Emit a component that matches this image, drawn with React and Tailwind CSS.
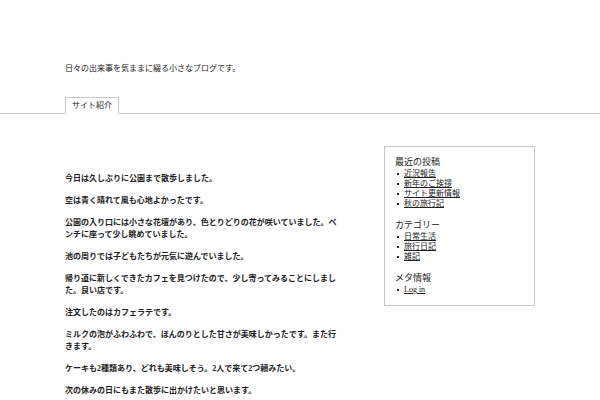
import React from "react";

const posts = ["近況報告", "新年のご挨拶", "サイト更新情報", "秋の旅行記"];
const categories = ["日常生活", "旅行日記", "雑記"];

const paragraphs = [
  "今日は久しぶりに公園まで散歩しました。",
  "空は青く晴れて風も心地よかったです。",
  "公園の入り口には小さな花壇があり、色とりどりの花が咲いていました。ベンチに座って少し眺めていました。",
  "池の周りでは子どもたちが元気に遊んでいました。",
  "帰り道に新しくできたカフェを見つけたので、少し寄ってみることにしました。良い店です。",
  "注文したのはカフェラテです。",
  "ミルクの泡がふわふわで、ほんのりとした甘さが美味しかったです。また行きます。",
  "ケーキも2種類あり、どれも美味しそう。2人で来て2つ頼みたい。",
  "次の休みの日にもまた散歩に出かけたいと思います。",
];

function Widget({ title, children }) {
  return (
    <section>
      <h2 className="pb-[1px] text-[9px] leading-[11px] font-normal">{title}</h2>
      <ul className="text-[8px] leading-[10px]">{children}</ul>
    </section>
  );
}

function Item({ children }) {
  return (
    <li className="flex items-center gap-[5px]">
      <span className="ml-[2px] h-[2px] w-[2px] bg-[#222]" />
      <a href="#" className="underline">
        {children}
      </a>
    </li>
  );
}

export default function App() {
  return (
    <div className="min-h-screen bg-white text-[#222] font-['Liberation_Serif','Noto_Sans_CJK_JP',serif]">
      {/* Header + menu tab */}
      <div className="border-b border-[#c8c8c8]">
        <div className="mx-auto w-[470px]">
          <p className="pt-[64px] text-[8px] leading-[10px]">
            日々の出来事を気ままに綴る小さなブログです。
          </p>
          <div className="mt-[23px] flex">
            <a
              href="#"
              className="-mb-px flex h-[17px] items-center border border-[#c8c8c8] border-b-white bg-white px-[6px] text-[8px] leading-[10px]"
            >
              サイト紹介
            </a>
          </div>
        </div>
      </div>

      {/* Content */}
      <div className="mx-auto flex w-[470px] justify-between pt-[32px]">
        <main className="w-[272px] pt-[27px] text-[8px] font-bold leading-[12px]">
          {paragraphs.map((p, i) => (
            <p key={i} className="mb-[10px]">
              {p}
            </p>
          ))}
        </main>

        <aside className="w-[151px] self-start border border-[#c8c8c8] px-[10px] pt-[10px] pb-[10px]">
          <div className="flex flex-col gap-[11px]">
            <Widget title="最近の投稿">
              {posts.map((t) => (
                <Item key={t}>{t}</Item>
              ))}
            </Widget>
            <Widget title="カテゴリー">
              {categories.map((t) => (
                <Item key={t}>{t}</Item>
              ))}
            </Widget>
            <Widget title="メタ情報">
              <Item>Log in</Item>
            </Widget>
          </div>
        </aside>
      </div>
    </div>
  );
}
